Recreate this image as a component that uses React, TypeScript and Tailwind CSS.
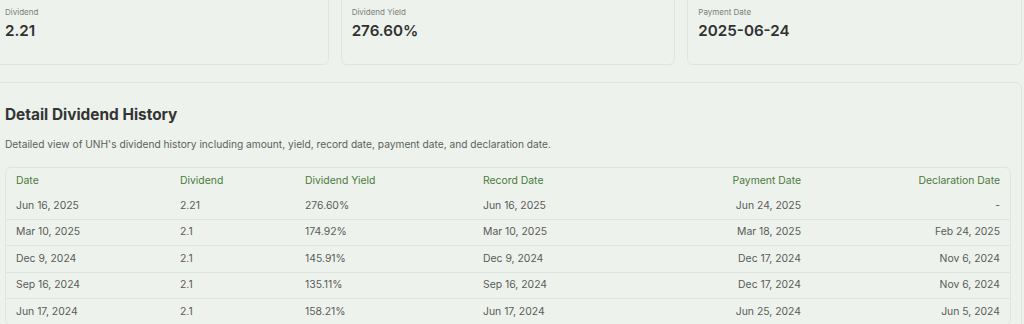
import React from "react";

const cards = [
  { label: "Dividend", value: "2.21" },
  { label: "Dividend Yield", value: "276.60%" },
  { label: "Payment Date", value: "2025-06-24" },
];

const rows = [
  ["Jun 16, 2025", "2.21", "276.60%", "Jun 16, 2025", "Jun 24, 2025", "-"],
  ["Mar 10, 2025", "2.1", "174.92%", "Mar 10, 2025", "Mar 18, 2025", "Feb 24, 2025"],
  ["Dec 9, 2024", "2.1", "145.91%", "Dec 9, 2024", "Dec 17, 2024", "Nov 6, 2024"],
  ["Sep 16, 2024", "2.1", "135.11%", "Sep 16, 2024", "Dec 17, 2024", "Nov 6, 2024"],
  ["Jun 17, 2024", "2.1", "158.21%", "Jun 17, 2024", "Jun 25, 2024", "Jun 5, 2024"],
];

const headers = ["Date", "Dividend", "Dividend Yield", "Record Date", "Payment Date", "Declaration Date"];

const align = ["text-left", "text-left", "text-left", "text-left", "text-right", "text-right"];

const grid = "grid grid-cols-[164px_125px_178px_159px_159px_1fr] px-[10px]";

export default function App() {
  return (
    <div
      className="min-h-[324px] w-[1024px] overflow-hidden bg-[#eef2ed]"
      style={{ fontFamily: "Inter, 'Noto Sans', sans-serif" }}
    >
      <div className="-ml-[6px] -mt-[6px] flex w-[1028px] flex-col gap-[17px]">
        <div className="grid grid-cols-3 gap-3">
          {cards.map((c) => (
            <div
              key={c.label}
              className="h-[71px] rounded-md border border-[#dfe5df] bg-[#eef2ed] px-[10px] pt-[11px]"
            >
              <div className="text-[8px] leading-[12px] text-[#7a7f7a]">{c.label}</div>
              <div className="mt-[1px] text-[15.2px] font-semibold leading-[24px] text-[#2f3130]">{c.value}</div>
            </div>
          ))}
        </div>
        <div className="rounded-md border border-[#dfe5df] bg-[#eef2ed] px-[10px] pt-[20px] pb-6">
          <h2 className="text-[15.4px] font-bold leading-[24px] text-[#333534]">Detail Dividend History</h2>
          <p className="mt-[9px] text-[10.2px] leading-[16px] text-[#5a5f5a]">
            Detailed view of UNH's dividend history including amount, yield, record date, payment date, and declaration date.
          </p>
          <div className="mt-[15px] rounded-md border border-[#dfe5df] text-[10.4px]">
            <div className={`${grid} h-[25px] items-center text-[#4a7a3a]`}>
              {headers.map((h, i) => (
                <div key={h} className={align[i]}>
                  {h}
                </div>
              ))}
            </div>
            {rows.map((r, ri) => (
              <div
                key={ri}
                className={`${grid} h-[25.5px] items-center text-[#585b58] ${ri < rows.length - 1 ? "border-b border-[#dfe5df] box-content" : ""}`}
              >
                {r.map((cell, i) => (
                  <div key={i} className={align[i]}>
                    {cell}
                  </div>
                ))}
              </div>
            ))}
          </div>
        </div>
      </div>
    </div>
  );
}
